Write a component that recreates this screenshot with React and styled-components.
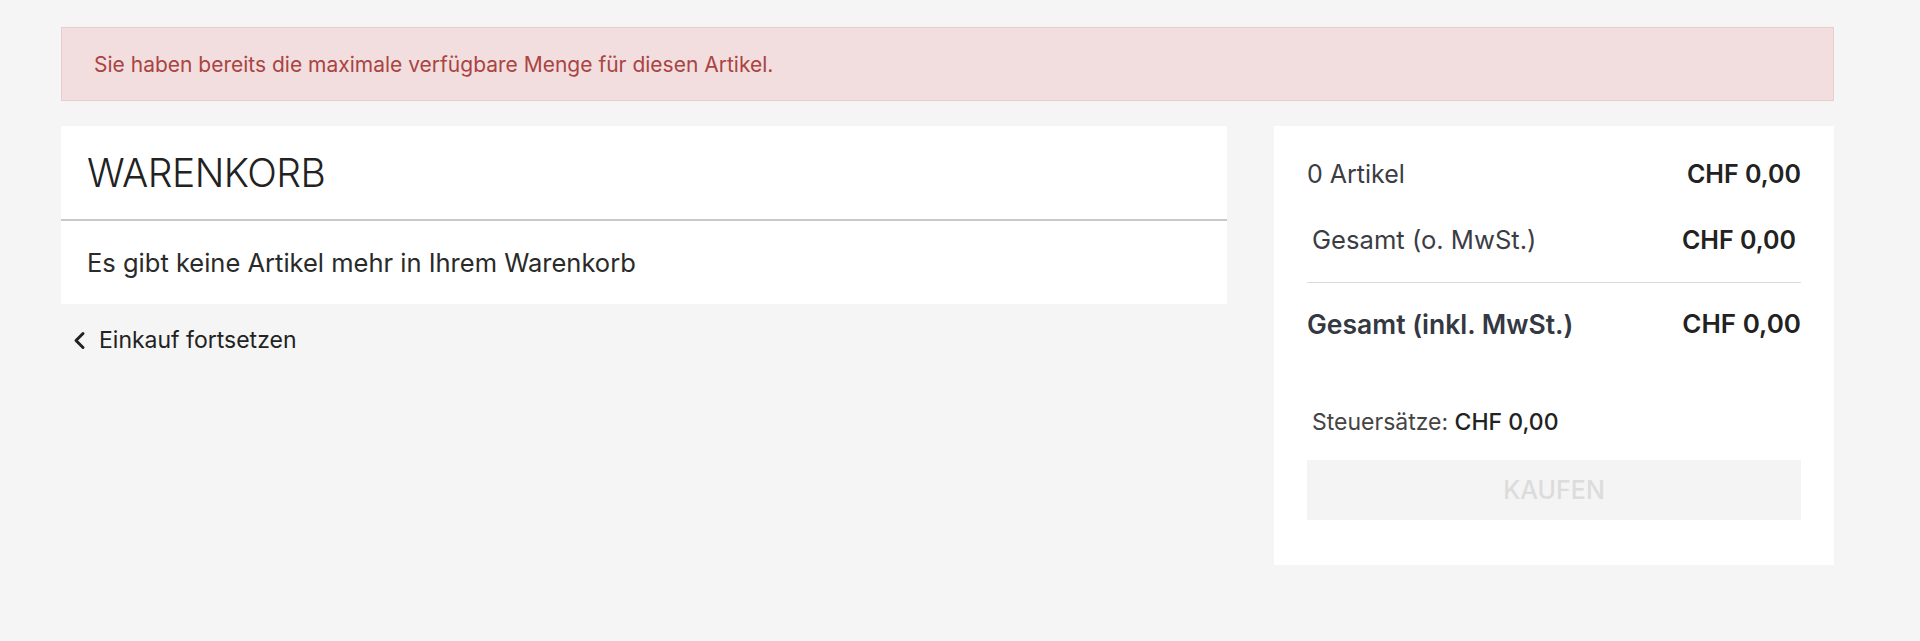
import React from 'react';
import styled, { createGlobalStyle } from 'styled-components';

const GlobalStyle = createGlobalStyle`
    html, body {
        margin: 0;
        padding: 0;
        background: #f5f5f5;
        font-family: Inter, "Noto Sans", sans-serif;
        color: #222;
    }
    * {
        box-sizing: border-box;
    }
`

const Page = styled.div`
    width: 1773px;
    margin-left: 61px;
    padding-top: 27px;
`

const Alert = styled.div`
    display: flex;
    align-items: center;
    height: 74px;
    padding: 0 32px;
    background: #f2dede;
    border: 1px solid #ebcccc;
    color: #a94442;
    font-size: 21px;
`

const Columns = styled.div`
    display: flex;
    align-items: flex-start;
    gap: 47px;
    margin-top: 25px;
`

const Main = styled.div`
    width: 1166px;
`

const Card = styled.div`
    background: #fff;
`

const CardHeader = styled.div`
    display: flex;
    align-items: center;
    height: 95px;
    padding: 0 26px;
    border-bottom: 2px solid #c9c9c9;
    h1 {
        margin: 0;
        font-size: 39px;
        font-weight: 300;
        color: #222;
        letter-spacing: -0.5px;
    }
`

const CardBody = styled.div`
    display: flex;
    align-items: center;
    height: 83px;
    padding: 0 26px;
    font-size: 25.5px;
    color: #2a2a2a;
`

const BackLink = styled.a`
    display: inline-flex;
    align-items: center;
    gap: 13px;
    margin-top: 21px;
    margin-left: 12px;
    font-size: 23px;
    line-height: 30px;
    color: #222;
    text-decoration: none;
    cursor: pointer;
    svg {
        width: 13px;
        height: 19px;
    }
`

const Summary = styled.aside`
    width: 560px;
    background: #fff;
    padding: 33px 33px 45px 33px;
`

const Row = styled.div`
    display: flex;
    justify-content: space-between;
    align-items: center;
    line-height: 30px;
    font-size: ${props => props.bold ? '26.5px' : '25px'};
    padding: 0 ${props => props.inset ? 5 : 0}px;
    margin-top: ${props => props.top || 0}px;
    color: ${props => props.bold ? '#343842' : '#3b3d44'};
    font-weight: ${props => props.bold ? 600 : 400};
    span {
        font-size: ${props => props.inset ? '25.6px' : 'inherit'};
    }
    b {
        color: #222;
        font-size: ${props => props.bold ? '26px' : '25px'};
        font-weight: 600;
    }
`

const Divider = styled.hr`
    margin: 27px 0 0 0;
    border: none;
    border-top: 1px solid #dcdcdc;
`

const TaxLine = styled.div`
    margin-top: 68px;
    padding-left: 5px;
    font-size: 23px;
    line-height: 30px;
    color: #444;
    b {
        color: #222;
        font-weight: 500;
    }
`

const BuyButton = styled.button`
    display: block;
    width: 100%;
    height: 60px;
    margin-top: 23px;
    border: none;
    background: #f4f4f4;
    color: #dcdcdc;
    font-family: inherit;
    font-size: 25px;
    font-weight: 500;
    cursor: not-allowed;
`

const Cart = () => {
    const rows = [
        { label: '0 Artikel', value: 'CHF 0,00' },
        { label: 'Gesamt (o. MwSt.)', value: 'CHF 0,00', inset: true, top: 36 },
    ]
    return (
        <Page>
            <Alert>Sie haben bereits die maximale verfügbare Menge für diesen Artikel.</Alert>
            <Columns>
                <Main>
                    <Card>
                        <CardHeader><h1>WARENKORB</h1></CardHeader>
                        <CardBody>Es gibt keine Artikel mehr in Ihrem Warenkorb</CardBody>
                    </Card>
                    <BackLink>
                        <svg viewBox="0 0 13 19" fill="none" stroke="#222" strokeWidth="3" strokeLinecap="round" strokeLinejoin="round">
                            <polyline points="10,2.5 3,9.5 10,16.5" />
                        </svg>
                        Einkauf fortsetzen
                    </BackLink>
                </Main>
                <Summary>
                    {rows.map((row, index) => (
                        <Row key={`row-${index}`} inset={row.inset} top={row.top}>
                            <span>{row.label}</span>
                            <b>{row.value}</b>
                        </Row>
                    ))}
                    <Divider />
                    <Row bold top={26}>
                        <span>Gesamt (inkl. MwSt.)</span>
                        <b>CHF 0,00</b>
                    </Row>
                    <TaxLine>Steuersätze: <b>CHF 0,00</b></TaxLine>
                    <BuyButton disabled>KAUFEN</BuyButton>
                </Summary>
            </Columns>
        </Page>
    )
}

export default function App() {
    return (
        <>
            <GlobalStyle />
            <Cart />
        </>
    )
}
